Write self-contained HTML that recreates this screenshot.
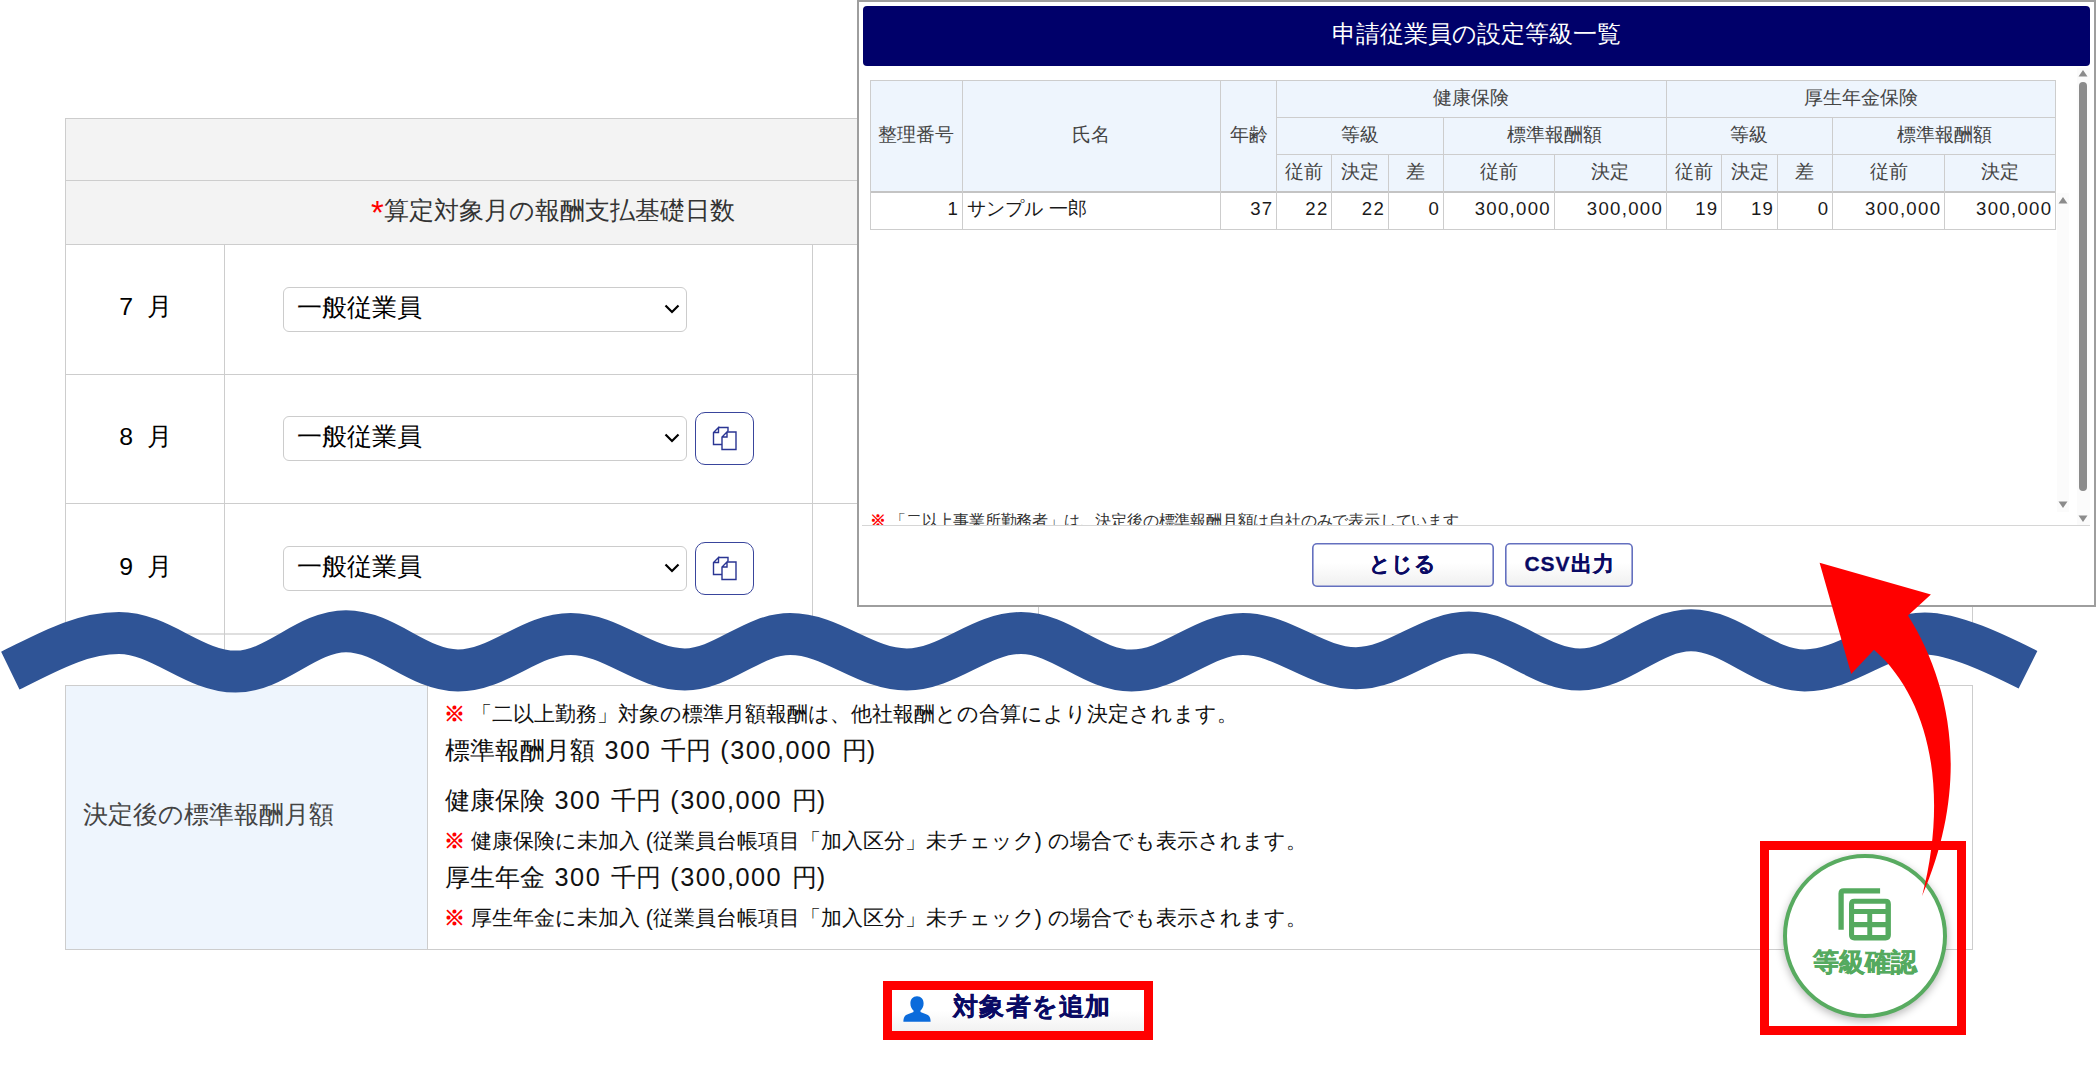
<!DOCTYPE html>
<html lang="ja">
<head>
<meta charset="utf-8">
<title>算定基礎届 - 等級確認</title>
<style>
*{box-sizing:border-box;margin:0;padding:0}
html,body{width:2096px;height:1083px;overflow:hidden;background:#fff}
body{font-family:"Liberation Sans",sans-serif;color:#000;position:relative}
.abs{position:absolute}
button{font-family:inherit;padding:0;margin:0;cursor:pointer;display:block}
button.btn{padding-bottom:2.5px;letter-spacing:0.7px}
.hl{position:absolute;height:1px;background:#cdcdcd}
.vl{position:absolute;width:1px;background:#cdcdcd}
.t{position:absolute;white-space:nowrap}
/* main table */
#mainhead{left:66px;top:119px;width:1907px;height:126px;background:#f3f3f3}
.month{font-size:24.8px;line-height:30px;width:159px;text-align:center;left:66px;word-spacing:7px}
.sel{position:absolute;left:283px;width:404px;height:45px;border:1px solid #ccc;border-radius:6px;background:#fff;font-size:24.6px;line-height:39px;padding-left:13px;white-space:nowrap}
.sel svg{position:absolute;right:6px;top:16px}
.copy{position:absolute;left:695px;width:59px;height:53px;border:1.5px solid #39459c;border-radius:10px;background:#fff}
.copy svg{position:absolute;left:16px;top:13px}
/* bottom table */
#btlabel{left:66px;top:686px;width:362px;height:264px;background:#eef5fd}
.big{font-size:25.3px;line-height:30px;left:445px;color:#111;word-spacing:2.5px}
.n{letter-spacing:1.5px}
.small{font-size:21.2px;line-height:26px;left:444px;color:#111}
.red{color:#f00}
.small .red{font-weight:bold}
/* modal */
#modal{left:857px;top:0;width:1239px;height:607px;border:2px solid #9e9e9e;background:#fff}
#mtitle{left:862.5px;top:5.5px;width:1227px;height:60px;background:#00006a;border-radius:4px;color:#fff;font-size:24px;line-height:55px;text-align:center}
#mth{left:871px;top:80px;width:1185px;height:112px;background:#eef5fd}
.mh{position:absolute;font-size:18.6px;line-height:24px;color:#444;text-align:center;white-space:nowrap}
.md{position:absolute;font-size:18.6px;line-height:24px;color:#1a1a1a;text-align:right;white-space:nowrap;top:197px;letter-spacing:1.3px}
.btn{position:absolute;top:543px;height:43.5px;border:0;box-shadow:inset 0 0 0 1.6px #6470bf;border-radius:5px;background:linear-gradient(#fff 0%,#fff 45%,#efefef 100%);color:#0a0a64;font-weight:bold;-webkit-text-stroke:0.3px #0a0a64;font-size:21px;line-height:42px;text-align:center;white-space:nowrap}
</style>
</head>
<body>

<!-- ===== main (upper) table ===== -->
<div class="abs" id="mainhead"></div>
<div class="hl" style="left:65px;top:118px;width:1908px"></div>
<div class="hl" style="left:65px;top:180px;width:1908px"></div>
<div class="hl" style="left:65px;top:244px;width:1908px"></div>
<div class="hl" style="left:65px;top:374px;width:1908px"></div>
<div class="hl" style="left:65px;top:503px;width:1908px"></div>
<div class="hl" style="left:65px;top:633px;width:1908px;height:2px;background:#dfdfdf"></div>
<div class="vl" style="left:65px;top:118px;height:534px"></div>
<div class="vl" style="left:224px;top:244px;height:408px"></div>
<div class="vl" style="left:812px;top:244px;height:408px"></div>
<div class="vl" style="left:1038px;top:244px;height:408px"></div>
<div class="vl" style="left:1972px;top:118px;height:534px"></div>
<div class="vl" style="left:1972px;top:685px;height:265px"></div>

<div class="t" style="left:371px;top:194px;font-size:25px;line-height:32px;color:#333"><span class="red" style="font-size:33px;line-height:0;position:relative;top:4.5px;margin-right:0.5px">*</span>算定対象月の報酬支払基礎日数</div>

<div class="t month" style="top:292px">7 月</div>
<div class="t month" style="top:422px">8 月</div>
<div class="t month" style="top:552px">9 月</div>

<div class="sel" role="combobox" aria-label="従業員区分" tabindex="0" style="top:286.5px">一般従業員<svg width="16" height="10" viewBox="0 0 16 10"><path d="M1.5 1.5 L8 8 L14.5 1.5" fill="none" stroke="#000" stroke-width="2.2"/></svg></div>
<div class="sel" role="combobox" aria-label="従業員区分" tabindex="0" style="top:415.5px">一般従業員<svg width="16" height="10" viewBox="0 0 16 10"><path d="M1.5 1.5 L8 8 L14.5 1.5" fill="none" stroke="#000" stroke-width="2.2"/></svg></div>
<div class="sel" role="combobox" aria-label="従業員区分" tabindex="0" style="top:545.5px">一般従業員<svg width="16" height="10" viewBox="0 0 16 10"><path d="M1.5 1.5 L8 8 L14.5 1.5" fill="none" stroke="#000" stroke-width="2.2"/></svg></div>

<button type="button" class="copy" aria-label="コピー" style="top:412px"><svg width="26" height="26" viewBox="0 0 26 26"><path d="M6.5 1.5 H16 V5.5 M10 18.5 H1.5 V6.5 L6.5 1.5 V6.5 H1.5" fill="none" stroke="#2a3593" stroke-width="1.4"/><path d="M15 6 H24 V23.5 H10 V11 L15 6 V11 H10" fill="#fff" stroke="#2a3593" stroke-width="1.4"/></svg></button>
<button type="button" class="copy" aria-label="コピー" style="top:542px"><svg width="26" height="26" viewBox="0 0 26 26"><path d="M6.5 1.5 H16 V5.5 M10 18.5 H1.5 V6.5 L6.5 1.5 V6.5 H1.5" fill="none" stroke="#2a3593" stroke-width="1.4"/><path d="M15 6 H24 V23.5 H10 V11 L15 6 V11 H10" fill="#fff" stroke="#2a3593" stroke-width="1.4"/></svg></button>

<!-- ===== bottom table ===== -->
<div class="abs" id="btlabel"></div>
<div class="hl" style="left:65px;top:685px;width:1908px"></div>
<div class="hl" style="left:65px;top:949px;width:1908px"></div>
<div class="vl" style="left:65px;top:685px;height:265px"></div>
<div class="vl" style="left:427px;top:685px;height:265px"></div>
<div class="t" style="left:83px;top:798px;font-size:25px;line-height:32px;color:#444">決定後の標準報酬月額</div>
<div class="t small" style="top:701px"><span class="red">※</span> 「二以上勤務」対象の標準月額報酬は、他社報酬との合算により決定されます。</div>
<div class="t big" style="top:735px">標準報酬月額 <span class="n">300</span> 千円 <span class="n">(300,000</span> 円)</div>
<div class="t big" style="top:785px">健康保険 <span class="n">300</span> 千円 <span class="n">(300,000</span> 円)</div>
<div class="t small" style="top:828px"><span class="red">※</span> 健康保険に未加入 (従業員台帳項目「加入区分」未チェック) の場合でも表示されます。</div>
<div class="t big" style="top:862px">厚生年金 <span class="n">300</span> 千円 <span class="n">(300,000</span> 円)</div>
<div class="t small" style="top:905px"><span class="red">※</span> 厚生年金に未加入 (従業員台帳項目「加入区分」未チェック) の場合でも表示されます。</div>

<!-- ===== modal ===== -->
<div class="abs" id="modal" role="dialog" aria-label="申請従業員の設定等級一覧"></div>
<div class="abs" id="mtitle">申請従業員の設定等級一覧</div>
<div class="abs" id="mth"></div>
<div class="hl" style="left:870.0px;top:79.5px;width:1186.1px;height:1px;background:#cdcdcd"></div>
<div class="hl" style="left:1276.2px;top:116.7px;width:779.9px;height:1px;background:#cdcdcd"></div>
<div class="hl" style="left:1276.2px;top:153.9px;width:779.9px;height:1px;background:#cdcdcd"></div>
<div class="hl" style="left:870.0px;top:191.0px;width:1186.1px;height:2px;background:#c4c4c4"></div>
<div class="hl" style="left:870.0px;top:228.8px;width:1186.1px;height:1px;background:#cdcdcd"></div>
<div class="vl" style="left:870.0px;top:79.5px;height:150.3px;background:#cdcdcd"></div>
<div class="vl" style="left:961.8px;top:79.5px;height:150.3px;background:#cdcdcd"></div>
<div class="vl" style="left:1220.2px;top:79.5px;height:150.3px;background:#cdcdcd"></div>
<div class="vl" style="left:1276.2px;top:79.5px;height:150.3px;background:#cdcdcd"></div>
<div class="vl" style="left:1331.3px;top:153.9px;height:75.9px;background:#cdcdcd"></div>
<div class="vl" style="left:1387.8px;top:153.9px;height:75.9px;background:#cdcdcd"></div>
<div class="vl" style="left:1442.9px;top:116.7px;height:113.1px;background:#cdcdcd"></div>
<div class="vl" style="left:1553.7px;top:153.9px;height:75.9px;background:#cdcdcd"></div>
<div class="vl" style="left:1665.8px;top:79.5px;height:150.3px;background:#cdcdcd"></div>
<div class="vl" style="left:1721.2px;top:153.9px;height:75.9px;background:#cdcdcd"></div>
<div class="vl" style="left:1776.9px;top:153.9px;height:75.9px;background:#cdcdcd"></div>
<div class="vl" style="left:1832.0px;top:116.7px;height:113.1px;background:#cdcdcd"></div>
<div class="vl" style="left:1944.0px;top:153.9px;height:75.9px;background:#cdcdcd"></div>
<div class="vl" style="left:2055.1px;top:79.5px;height:150.3px;background:#cdcdcd"></div>
<div class="mh" style="left:870.5px;width:91.8px;top:123.0px">整理番号</div>
<div class="mh" style="left:962.3px;width:258.4px;top:123.0px">氏名</div>
<div class="mh" style="left:1220.7px;width:56.0px;top:123.0px">年齢</div>
<div class="mh" style="left:1276.7px;width:389.6px;top:85.6px">健康保険</div>
<div class="mh" style="left:1666.3px;width:389.3px;top:85.6px">厚生年金保険</div>
<div class="mh" style="left:1276.7px;width:166.7px;top:122.8px">等級</div>
<div class="mh" style="left:1443.4px;width:222.9px;top:122.8px">標準報酬額</div>
<div class="mh" style="left:1666.3px;width:166.2px;top:122.8px">等級</div>
<div class="mh" style="left:1832.5px;width:223.1px;top:122.8px">標準報酬額</div>
<div class="mh" style="left:1276.7px;width:55.1px;top:160.2px">従前</div>
<div class="mh" style="left:1331.8px;width:56.5px;top:160.2px">決定</div>
<div class="mh" style="left:1388.3px;width:55.1px;top:160.2px">差</div>
<div class="mh" style="left:1443.4px;width:110.8px;top:160.2px">従前</div>
<div class="mh" style="left:1554.2px;width:112.1px;top:160.2px">決定</div>
<div class="mh" style="left:1666.3px;width:55.4px;top:160.2px">従前</div>
<div class="mh" style="left:1721.7px;width:55.7px;top:160.2px">決定</div>
<div class="mh" style="left:1777.4px;width:55.1px;top:160.2px">差</div>
<div class="mh" style="left:1832.5px;width:112.0px;top:160.2px">従前</div>
<div class="mh" style="left:1944.5px;width:111.1px;top:160.2px">決定</div>
<div class="md" style="left:870.5px;width:88.6px">1</div>
<div class="md" style="left:967.3px;text-align:left;letter-spacing:0;word-spacing:0.5px">サンプル 一郎</div>
<div class="md" style="left:1220.7px;width:52.8px">37</div>
<div class="md" style="left:1276.7px;width:51.9px">22</div>
<div class="md" style="left:1331.8px;width:53.3px">22</div>
<div class="md" style="left:1388.3px;width:51.9px">0</div>
<div class="md" style="left:1443.4px;width:107.6px">300,000</div>
<div class="md" style="left:1554.2px;width:108.9px">300,000</div>
<div class="md" style="left:1666.3px;width:52.2px">19</div>
<div class="md" style="left:1721.7px;width:52.5px">19</div>
<div class="md" style="left:1777.4px;width:51.9px">0</div>
<div class="md" style="left:1832.5px;width:108.8px">300,000</div>
<div class="md" style="left:1944.5px;width:107.9px">300,000</div>
<div class="abs" style="left:862px;top:500px;width:1200px;height:25.5px;overflow:hidden"><div class="t" style="left:8px;top:10.5px;font-size:15.8px;line-height:20px;color:#333;letter-spacing:-0.2px"><span class="red" style="font-weight:bold">※</span> 「二以上事業所勤務者」は、決定後の標準報酬月額は自社のみで表示しています</div></div>
<div class="hl" style="left:862.0px;top:525.3px;width:1227.5px;height:1px;background:#d6d6d6"></div>
<div class="abs" style="left:2056.5px;top:192.5px;width:12.5px;height:319px;background:#fbfbfb"></div>
<svg class="abs" style="left:2058px;top:196px" width="10" height="8" viewBox="0 0 10 8"><path d="M0.5 7.5 L5 1 L9.5 7.5 Z" fill="#8b8b8b"/></svg>
<svg class="abs" style="left:2058px;top:501px" width="10" height="8" viewBox="0 0 10 8"><path d="M0.5 0.5 L5 7 L9.5 0.5 Z" fill="#8b8b8b"/></svg>
<div class="abs" style="left:2076.5px;top:68px;width:13px;height:457px;background:#fbfbfb"></div>
<svg class="abs" style="left:2078px;top:69px" width="10" height="8" viewBox="0 0 10 8"><path d="M0.5 7.5 L5 1 L9.5 7.5 Z" fill="#8b8b8b"/></svg>
<svg class="abs" style="left:2078px;top:515px" width="10" height="8" viewBox="0 0 10 8"><path d="M0.5 0.5 L5 7 L9.5 0.5 Z" fill="#8b8b8b"/></svg>
<div class="abs" style="left:2079.2px;top:82px;width:7.8px;height:408.5px;background:#8b8b8b;border-radius:4px"></div>
<button type="button" class="btn" style="left:1312px;width:181.5px">とじる</button>
<button type="button" class="btn" style="left:1505px;width:128px;letter-spacing:1px;text-indent:1px">CSV出力</button>

<!-- ===== annotations: wave / arrow / highlights ===== -->
<svg class="abs" style="left:0;top:0" width="2096" height="1083" viewBox="0 0 2096 1083"><path d="M10.3 670.6 C45.5 653.5 79.9 633 119 633 C161.0 633 193.7 671.6 235.7 671.6 C275.4 671.6 306.3 631.2 346 631.2 C386.3 631.2 417.7 670.5 458 670.5 C498.6 670.5 530.1 633.9 570.7 633.9 C611.8 633.9 643.7 669.4 684.8 669.4 C722.7 669.4 752.3 634 790.2 634 C832.2 634 864.8 669.4 906.8 669.4 C947.9 669.4 979.9 633 1021 633 C1060.8 633 1091.7 670.6 1131.5 670.6 C1171.6 670.6 1202.9 634 1243 634 C1283.7 634 1315.3 668.2 1356 668.2 C1396.6 668.2 1428.3 632.6 1468.9 632.6 C1508.9 632.6 1540.0 669.5 1580 669.5 C1620.0 669.5 1651.0 630.3 1691 630.3 C1731.9 630.3 1763.7 670.4 1804.6 670.4 C1847.9 670.4 1881.5 633.4 1924.8 633.4 C1953.7 633.4 1995.1 653.3 2028 669.7" fill="none" stroke="#2f5496" stroke-width="42"/></svg>
<div class="abs" style="left:891px;top:989px;width:254px;height:43px;background:linear-gradient(#fff 0%,#fff 50%,#f1f1f1 100%)"></div>
<svg class="abs" style="left:903px;top:996px" width="28" height="26" viewBox="0 0 28 26"><path d="M14 0.3c4 0 6.6 3 6.6 7.2 0 3-1.3 5.600-3.100 7v1.600c3 1.200 7.500 2.400 9 4.600 0.800 1.200 1.100 3 1.100 5H0.400c0-2 0.300-3.800 1.100-5 1.500-2.200 6-3.400 9-4.600V14.500C8.700 13.100 7.400 10.500 7.400 7.500 7.400 3.300 10 0.300 14 0.300z" fill="#0b6bdb"/></svg>
<div class="t" style="left:953px;top:991px;font-size:24.6px;line-height:32px;font-weight:bold;color:#0a0a64;letter-spacing:1.3px;-webkit-text-stroke:0.4px #0a0a64">対象者を追加</div>
<div class="abs" style="left:883px;top:981px;width:270px;height:59px;border:9px solid #f00"></div>
<div class="abs" style="left:1783px;top:854px;width:164px;height:164px;border-radius:50%;border:4px solid #58ab60;background:#fff;box-shadow:0 3px 8px rgba(0,0,0,.28)"></div>
<svg class="abs" style="left:1836px;top:886px" width="58" height="58" viewBox="0 0 58 58"><path d="M5.1 43.8V7.6Q5.1 4.8 7.9 4.8H44.1" fill="none" stroke="#55aa5f" stroke-width="5.3"/><path d="M18.4 12.700h31.100q5.400 0 5.400 5.400v31q0 5.400-5.400 5.400H18.400q-5.400 0-5.400-5.400v-31q0-5.400 5.400-5.400z M18.100 17.800v5.300h31.400v-5.300z M18.100 28.100v8h13.200v-8z M36.200 28.100v8h13.300v-8z M18.100 41.200v7.900h13.200v-7.900z M36.200 41.200v7.900h13.300v-7.900z" fill="#55aa5f" fill-rule="evenodd"/></svg>
<div class="t" style="left:1783px;width:164px;text-align:center;top:946px;font-size:25.8px;line-height:32px;font-weight:bold;color:#55aa5f;-webkit-text-stroke:0.5px #55aa5f">等級確認</div>
<div class="abs" style="left:1760px;top:841px;width:206px;height:194px;border:9px solid #f00"></div>
<svg class="abs" style="left:0;top:0" width="2096" height="1083" viewBox="0 0 2096 1083"><path d="M1819.6 562.8 L1930.9 594.4 L1908 615.4 C1949 680.6 1972.5 779 1922.1 896 C1948.8 792.3 1930.1 698.7 1874 649.8 L1851.2 674 Z" fill="#f00"/></svg>

</body>
</html>
